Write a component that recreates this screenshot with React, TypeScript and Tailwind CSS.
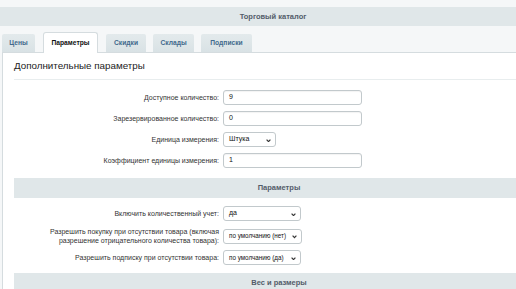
import React from 'react';

const tabs = [
  { label: 'Цены', w: 'w-[33px]' },
  { label: 'Параметры', w: 'w-[55px]', active: true },
  { label: 'Скидки', w: 'w-[40px]' },
  { label: 'Склады', w: 'w-[41px]' },
  { label: 'Подписки', w: 'w-[51px]' },
];

const Chevron = () => (
  <svg className="absolute right-[4px] top-[5.5px]" width="5" height="3.5" viewBox="0 0 5 3.5">
    <path d="M0.6 0.6 L2.5 2.6 L4.4 0.6" fill="none" stroke="#333" strokeWidth="1.2" />
  </svg>
);

const TextField = ({ value }: { value: string }) => (
  <div className="flex h-[15px] w-[139px] items-center rounded-[3px] border border-[#c2c9cc] bg-white px-[5px] text-[7px] text-[#111] shadow-[inset_0_1px_1px_rgba(0,0,0,0.05)]">
    {value}
  </div>
);

const SelectField = ({ value, w, size = 'text-[7px]' }: { value: string; w: string; size?: string }) => (
  <div
    className={`relative flex h-[15px] ${w} items-center rounded-[3px] border border-[#c2c9cc] bg-white pl-[5px] ${size} text-[#111]`}
  >
    <span className="whitespace-nowrap">{value}</span>
    <Chevron />
  </div>
);

const Row = ({ label, children, h = 'h-[15px]' }: { label: React.ReactNode; children: React.ReactNode; h?: string }) => (
  <div className={`flex items-center ${h}`}>
    <div className="w-[216px] whitespace-nowrap text-right text-[7px] leading-[9px] text-[#333]">{label}</div>
    <div className="ml-[4px]">{children}</div>
  </div>
);

const SectionHeader = ({ title }: { title: string }) => (
  <div className="ml-[11px] mr-[2px] flex h-[20px] items-center justify-center bg-[#e0e7e9] text-[7.5px] font-bold text-[#535c69]">
    {title}
  </div>
);

export default function App() {
  return (
    <div className="h-[289px] w-[516px] overflow-hidden bg-[#f5f7f8] font-['Liberation_Sans',Arial,sans-serif]">
      <div className="w-[546px]">
        <div className="h-[7px]" />
        <div className="flex h-[19px] items-center justify-center bg-[#e0e7e9] text-[7.5px] font-bold text-[#535c69]">
          Торговый каталог
        </div>

        {/* tabs */}
        <div className="flex h-[26px] items-end gap-[7px] pl-[2px]">
          {tabs.map((t) =>
            t.active ? (
              <div
                key={t.label}
                className={`relative -mb-px ml-px mr-px flex h-[21px] ${t.w} items-center justify-center rounded-t-[3px] border border-b-0 border-[#d5dcdf] bg-white text-[6.7px] font-bold text-[#111]`}
              >
                {t.label}
              </div>
            ) : (
              <div
                key={t.label}
                className={`flex h-[18px] ${t.w} items-center justify-center rounded-t-[2px] bg-gradient-to-b from-[#e3eaec] to-[#d9e2e5] text-[6.7px] font-bold text-[#41698c]`}
              >
                {t.label}
              </div>
            )
          )}
        </div>

        {/* content */}
        <div className="ml-[2px] h-[300px] border-l border-t border-[#d5dcdf] bg-white">
          <div className="ml-[11px] mr-[2px] flex h-[27px] items-center border-b border-[#e8edee] pt-[1px] text-[9.8px] text-[#222]">
            Дополнительные параметры
          </div>

          <div className="flex flex-col gap-[6px] pt-[10px]">
            <Row label="Доступное количество:">
              <TextField value="9" />
            </Row>
            <Row label="Зарезервированное количество:">
              <TextField value="0" />
            </Row>
            <Row label="Единица измерения:">
              <SelectField value="Штука" w="w-[53px]" />
            </Row>
            <Row label="Коэффициент единицы измерения:">
              <TextField value="1" />
            </Row>
          </div>

          <div className="h-[10px]" />
          <SectionHeader title="Параметры" />

          <div className="flex flex-col pt-[8px]">
            <Row label="Включить количественный учет:">
              <SelectField value="да" w="w-[78px]" />
            </Row>
            <div className="h-[5px]" />
            <Row
              h="h-[20px]"
              label={
                <>
                  Разрешить покупку при отсутствии товара (включая
                  <br />
                  разрешение отрицательного количества товара):
                </>
              }
            >
              <SelectField value="по умолчанию (нет)" w="w-[79px]" size="text-[6.3px]" />
            </Row>
            <div className="h-[4px]" />
            <Row label="Разрешить подписку при отсутствии товара:">
              <SelectField value="по умолчанию (да)" w="w-[78px]" size="text-[6.3px]" />
            </Row>
          </div>

          <div className="h-[8px]" />
          <SectionHeader title="Вес и размеры" />
        </div>
      </div>
    </div>
  );
}
